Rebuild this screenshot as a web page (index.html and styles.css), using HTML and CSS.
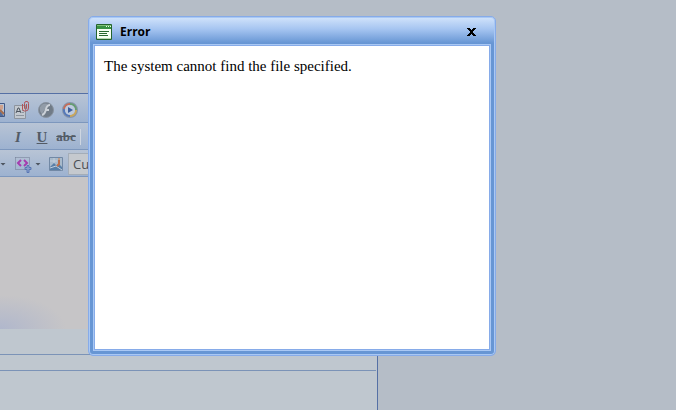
FILE: index.html
```
<!DOCTYPE html>
<html lang="en">
<head>
  <meta charset="UTF-8">
  <title>Error</title>
  <link rel="stylesheet" href="styles.css">
</head>
<body>
  <!-- Editor behind the dialog -->
  <main class="editor">
    <div class="toolbar icons">
      <button type="button" class="cut" aria-label="Image manager">
        <svg width="5" height="16" viewBox="11 0 5 16"><path d="M0 1.5h15.5v13H0" fill="#b9c4d4" stroke="#405887"/><path d="M11 9l4 5h-4z" fill="#536e9d"/><path d="M11 3h3v4l-3 2z" fill="#cda18d"/><path d="M11 8l4 4" stroke="#a66d4c" stroke-width="2"/></svg>
      </button>
      <button type="button" aria-label="Document manager">
        <svg width="16" height="18" viewBox="0 0 16 18"><path d="M.5 4.500h11v13H.5z" fill="#c3c9d0" stroke="#8d949e"/><path d="M2 12l2-5h1l2 5M3 10.500h3" fill="none" stroke="#4d555f"/><path d="M8 9.500h2M8 11.500h2M2 14.500h8" stroke="#8d959f"/><path d="M8.500 3v5q0 2 2 2h1q3 0 3-3V2.500q0-2-1.500-2h-1q-1.500 0-1.500 2V7q0 1 1 1t1-1V3" fill="none" stroke="#b05258"/></svg>
      </button>
      <button type="button" aria-label="Flash manager">
        <svg width="16" height="16" viewBox="0 0 16 16"><circle cx="8" cy="8" r="7.500" fill="#707b87" stroke="#8993a0"/><path d="M2 5a7 7 0 0 1 8-3L4 12a7 7 0 0 1-2-7" fill="#929ca8"/><path d="M12 3q-3 0-4 4-1 5-4 6M7 8h4" fill="none" stroke="#cbd1d8" stroke-width="2"/></svg>
      </button>
      <button type="button" aria-label="Media manager">
        <svg width="16" height="16" viewBox="0 0 16 16"><circle cx="8" cy="8" r="7" fill="#aebbd0" stroke="#8794a9" stroke-width="2"/><g fill="none" stroke-width="2"><path d="M2 7a6 6 0 0 1 6-5" stroke="#c66d59"/><path d="M8 2a6 6 0 0 1 6 6" stroke="#669d72"/><path d="M14 8a6 6 0 0 1-6 6" stroke="#c9a75b"/><path d="M8 14a6 6 0 0 1-6-7" stroke="#5579b9"/></g><circle cx="8" cy="8" r="5" fill="#bdcade"/><path d="M6 5l5 3-5 3z" fill="#3d5e9c"/></svg>
      </button>
    </div>
    <div class="toolbar format">
      <button type="button" class="italic" aria-label="Italic">I</button>
      <button type="button" class="underline" aria-label="Underline">U</button>
      <button type="button" class="strike" aria-label="Strikethrough">abc</button>
      <span class="separator"></span>
    </div>
    <div class="toolbar styles">
      <button type="button" class="arrow" aria-label="More options"></button>
      <button type="button" class="snippet" aria-label="Code snippet">
        <svg width="17" height="17" viewBox="0 0 17 17"><path d="M.5 1.500h14M.5 13.500h9M.5 1.500v12M14.500 1.500v8" fill="none" stroke="#6e7990" stroke-dasharray="1 1"/><path d="M6 4L3 7l3 3M9 4l3 3-3 3" fill="none" stroke="#a53caf" stroke-width="2"/><path d="M10 11.500h2v-2h2v2h2v2h-2v3h-2v-3h-2z" fill="#889fcb" stroke="#5976b3"/></svg>
      </button>
      <button type="button" class="arrow" aria-label="Snippet options"></button>
      <button type="button" class="map" aria-label="Image map">
        <svg width="14" height="14" viewBox="0 0 14 14"><path d="M.5.5h13v13H.5z" fill="#a8bacb" stroke="#7188a5"/><path d="M1 10l4-4 3 3 2-2 3 3v3H1z" fill="#587fa7"/><path d="M1 4h7M5 1v5M1 11l6-2 6 4" fill="none" stroke="#c2cedb"/><path d="M10 3v4L8 9" fill="none" stroke="#bd704b" stroke-width="2"/><circle cx="10" cy="2" r="1" fill="#c59071"/></svg>
      </button>
      <input class="style-box" type="text" value="Custom Links" aria-label="Custom links">
    </div>
    <div class="canvas"></div>
    <div class="modes"></div>
    <div class="status"></div>
  </main>

  <!-- Error dialog -->
  <section class="dialog" role="dialog" aria-labelledby="dialog-title">
    <header class="titlebar">
      <svg width="16" height="16" viewBox="0 0 16 16"><path d="M.5.5h15v15H.5z" fill="#f7fff3" stroke="#24632d"/><path d="M1 1h14v4H1z" fill="#399243"/><path d="M1 1h14v1H1z" fill="#7fc078"/><path d="M10 2h1v1h-1zM12 2h1v1h-1zM14 2h1v1h-1z" fill="#e9ffe4"/><path d="M3 7.500h10M3 9.500h8M3 11.500h9" stroke="#28672e"/><path d="M1 14h14v1H1z" fill="#bad7b2"/></svg>
      <h1 id="dialog-title">Error</h1>
      <button type="button" class="close" aria-label="Close">
        <svg width="9" height="8" viewBox="0 0 9 8"><path d="M0 0h3v1h1v1h1V1h1V0h3v1H8v1H7v1H6v2h1v1h1v1h1v1H6V7H5V6H4v1H3v1H0V7h1V6h1V5h1V3H2V2H1V1H0z"/></svg>
      </button>
    </header>
    <div class="message">The system cannot find the file specified.</div>
  </section>
</body>
</html>
```
FILE: styles.css
```
* {
  box-sizing: border-box;
}

html, body {
  margin: 0;
  height: 100%;
}

body {
  position: relative;
  display: flex;
  padding: 93px 298px 0 0;
  overflow: hidden;
  background: #b5bdc7;
}

button {
  flex: none;
  padding: 0;
  border: 0;
  background: none;
  color: #535b66;
}

svg {
  display: block;
}

.editor {
  flex: 1;
  display: flex;
  flex-direction: column;
  min-width: 0;
  border-top: 1px solid #5570a5;
  border-right: 1px solid #5570a5;
  background: #bfc7cf;
}

.toolbar {
  display: flex;
  align-items: center;
  height: 27px;
  padding-top: 2px;
  overflow: hidden;
  border-bottom: 1px solid #7d97bd;
  background: linear-gradient(#b8c4d5, #9db2d0);
}

.icons {
  height: 29px;
  padding-top: 4px;
  gap: 8px;
}

.icons .cut {
  margin-right: 1px;
}

.format button {
  width: 24px;
  font: bold 15px "Liberation Serif", serif;
}

.format .italic {
  margin-left: 6px;
  font-style: italic;
}

.format .underline {
  text-decoration: underline;
}

.format .strike {
  font-size: 13px;
  text-decoration: line-through;
}

.separator {
  width: 1px;
  height: 16px;
  margin-left: 2px;
  background: #ced6e1;
}

.arrow {
  width: 6px;
  height: 3px;
  background: #4d5560;
  clip-path: polygon(0 0, 100% 0, 50% 100%);
}

.snippet {
  margin: 0 3px 0 9px;
}

.map {
  margin: 0 5px 0 8px;
}

.style-box {
  flex: 1;
  min-width: 0;
  height: 22px;
  padding: 0 4px;
  border: 1px solid #a4adb8;
  background: #c5c9ce;
  color: #4b4f55;
  font: 13px "Open Sans", sans-serif;
}

.canvas {
  height: 152px;
  background: radial-gradient(ellipse 66px 34px at 0 100%, #b0b7cc, transparent), #c6c5c7;
}

.modes {
  height: 26px;
  border-bottom: 1px solid #7b93b7;
}

.status {
  height: 16px;
  margin-right: 1px;
  border-bottom: 1px solid #7b93b7;
}

.dialog {
  position: absolute;
  top: 16px;
  left: 88px;
  right: 180px;
  padding: 0 4px 4px;
  border: 1px solid #86abe9;
  border-radius: 5px;
  background: linear-gradient(#d2e4fb, #a6c5f1 12px, #6796d4 26px);
  box-shadow: inset 0 0 0 1px #a9c8f4;
}

.titlebar {
  display: flex;
  align-items: center;
  gap: 8px;
  height: 27px;
  padding: 2px 15px 0 3px;
}

.titlebar h1 {
  flex: 1;
  margin: 0;
  font: bold 12px/14px "Open Sans", sans-serif;
}

.close {
  color: #000;
}

.message {
  min-height: 307px;
  padding: 11px 10px;
  border: 1px solid #a9c8f4;
  outline: 1px solid #86abe9;
  outline-offset: -2px;
  background: #fff;
  font: 15px/20px "Liberation Serif", serif;
}
```
